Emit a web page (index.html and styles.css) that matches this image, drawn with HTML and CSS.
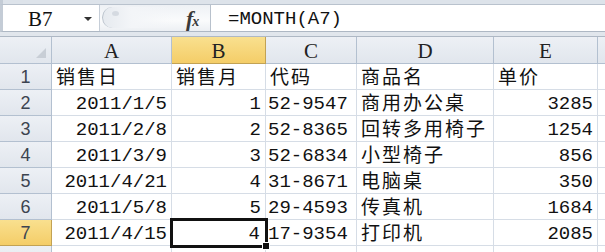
FILE: index.html
```html
<!DOCTYPE html>
<html lang="zh-CN">
<head>
<meta charset="utf-8">
<title>Excel</title>
<link rel="stylesheet" href="styles.css">
</head>
<body>
<div class="app">
  <div class="topband"></div>
  <div class="fbar">
    <div class="namebox"><span class="ref">B7</span><span class="caret"></span></div>
    <div class="mid"><div class="grip"><span class="dot"></span></div><span class="fx"><i>f</i><span class="x">x</span></span></div>
    <div class="formula">=MONTH(A7)</div>
  </div>
  <div class="sep"></div>
  <div class="sheet">
    <div class="h corner"><span class="tri"></span></div>
    <div class="h col">A</div>
    <div class="h col sel">B</div>
    <div class="h col">C</div>
    <div class="h col">D</div>
    <div class="h col">E</div>
    <div class="h col last"></div>

    <div class="h rn">1</div>
    <div class="c l cjk">销售日</div>
    <div class="c l cjk">销售月</div>
    <div class="c l cjk">代码</div>
    <div class="c l cjk">商品名</div>
    <div class="c l cjk">单价</div>
    <div class="c last"></div>

    <div class="h rn">2</div>
    <div class="c r">2011/1/5</div>
    <div class="c r">1</div>
    <div class="c l">52-9547</div>
    <div class="c l cjk">商用办公桌</div>
    <div class="c r">3285</div>
    <div class="c last"></div>

    <div class="h rn">3</div>
    <div class="c r">2011/2/8</div>
    <div class="c r">2</div>
    <div class="c l">52-8365</div>
    <div class="c l cjk">回转多用椅子</div>
    <div class="c r">1254</div>
    <div class="c last"></div>

    <div class="h rn">4</div>
    <div class="c r">2011/3/9</div>
    <div class="c r">3</div>
    <div class="c l">52-6834</div>
    <div class="c l cjk">小型椅子</div>
    <div class="c r">856</div>
    <div class="c last"></div>

    <div class="h rn">5</div>
    <div class="c r">2011/4/21</div>
    <div class="c r">4</div>
    <div class="c l">31-8671</div>
    <div class="c l cjk">电脑桌</div>
    <div class="c r">350</div>
    <div class="c last"></div>

    <div class="h rn">6</div>
    <div class="c r">2011/5/8</div>
    <div class="c r">5</div>
    <div class="c l">29-4593</div>
    <div class="c l cjk">传真机</div>
    <div class="c r">1684</div>
    <div class="c last"></div>

    <div class="h rn sel">7</div>
    <div class="c r">2011/4/15</div>
    <div class="c r active">4<span class="handle"></span></div>
    <div class="c l">17-9354</div>
    <div class="c l cjk">打印机</div>
    <div class="c r">2085</div>
    <div class="c last"></div>

    <div class="h rn"></div>
    <div class="c"></div>
    <div class="c"></div>
    <div class="c"></div>
    <div class="c"></div>
    <div class="c"></div>
    <div class="c last"></div>
  </div>
</div>
</body>
</html>
```

FILE: styles.css
```css
html, body {
  margin: 0;
  padding: 0;
  background: #dfe4eb;
}
.app {
  width: 605px;
  height: 252px;
  overflow: hidden;
  font-family: "Liberation Mono", "Noto Sans CJK SC", monospace;
  color: #111;
}
.topband {
  height: 4px;
  background: #dde3ea;
  border-bottom: 1px solid #b9c2cd;
  border-left: 3px solid #c4ccd6;
}
.fbar {
  display: flex;
  height: 26px;
  background: #dfe4eb;
  border-left: 3px solid #c4ccd6;
  border-bottom: 1px solid #aeb8c4;
}
.namebox {
  width: 96px;
  background: #fff;
  border-right: 1px solid #c6ced8;
  display: flex;
  align-items: center;
  position: relative;
}
.ref {
  font-family: "Liberation Serif", serif;
  font-size: 21px;
  margin-left: 25px;
  line-height: 26px;
  padding-top: 2px;
}
.caret {
  position: absolute;
  left: 81px;
  top: 12px;
  width: 0;
  height: 0;
  border-left: 4px solid transparent;
  border-right: 4px solid transparent;
  border-top: 4px solid #333;
}
.mid {
  width: 110px;
  display: flex;
  align-items: center;
  background: linear-gradient(#eef1f5, #fafbfc 60%, #eceff3);
  position: relative;
}
.grip {
  position: absolute;
  left: 2px;
  top: 2px;
  width: 70px;
  height: 21px;
  border-radius: 11px 0 0 11px;
  border-left: 1px solid #b9c1cb;
  background: linear-gradient(90deg, #e6eaef, #f3f5f8 40%, rgba(243,245,248,0));
}
.dot {
  position: absolute;
  left: 9px;
  top: 4px;
  width: 7px;
  height: 5px;
  border-radius: 50%;
  background: #d5dae1;
}
.fx {
  position: absolute;
  left: 86px;
  top: 1px;
  font-family: "Liberation Serif", serif;
  font-size: 22px;
  font-weight: bold;
  color: #3a3a3a;
  letter-spacing: -1px;
}
.fx .x {
  font-size: 14px;
  font-weight: bold;
  font-style: italic;
}
.formula {
  flex: 1;
  background: #fff;
  border-left: 1px solid #b8c1cc;
  font-size: 19px;
  line-height: 26px;
  padding-left: 17px;
  padding-top: 1px;
}
.sep {
  height: 4px;
  background: #e1e6ec;
  border-bottom: 1px solid #aeb8c4;
}
.sheet {
  display: grid;
  grid-template-columns: 52px 120px 94px 91px 137px 104px 7px;
  grid-template-rows: 27px repeat(8, 26px);
  background: #fff;
}
.h {
  background: linear-gradient(#edf0f5, #e1e6ed);
  border-right: 1px solid #b3c0d0;
  border-bottom: 1px solid #b3c0d0;
  box-sizing: border-box;
  display: flex;
  align-items: center;
  justify-content: center;
}
.col {
  font-family: "Liberation Serif", serif;
  font-size: 21px;
  color: #222;
  padding-top: 3px;
}
.col.last { border-right: none; }
.rn {
  font-family: "Liberation Sans", sans-serif;
  font-size: 18px;
  color: #3c4450;
  padding-top: 2px;
}
.h.sel {
  background: linear-gradient(#f9e08f, #f4cd68);
  border-color: #c2a254;
}
.corner { position: relative; }
.tri {
  position: absolute;
  right: 5px;
  bottom: 5px;
  width: 0;
  height: 0;
  border-left: 10px solid transparent;
  border-bottom: 10px solid #c8ced6;
}
.c {
  box-sizing: border-box;
  border-right: 1px solid #d6dde6;
  border-bottom: 1px solid #d6dde6;
  font-size: 19px;
  line-height: 25px;
  white-space: nowrap;
  padding-top: 2px;
}
.c.last { border-right: none; }
.c.r { text-align: right; padding-right: 4px; }
.c.l { text-align: left; padding-left: 2px; }
.c.cjk {
  font-family: "Noto Sans CJK SC", sans-serif;
  font-size: 19px;
  letter-spacing: 2px;
  line-height: 24px;
  padding-left: 4px;
  padding-top: 0;
}
.c.active {
  position: relative;
  outline: 3px solid #111;
  outline-offset: -1px;
  padding-right: 5px;
}
.handle {
  position: absolute;
  right: -5px;
  bottom: -5px;
  width: 6px;
  height: 6px;
  background: #111;
  border: 1px solid #fff;
}
```
